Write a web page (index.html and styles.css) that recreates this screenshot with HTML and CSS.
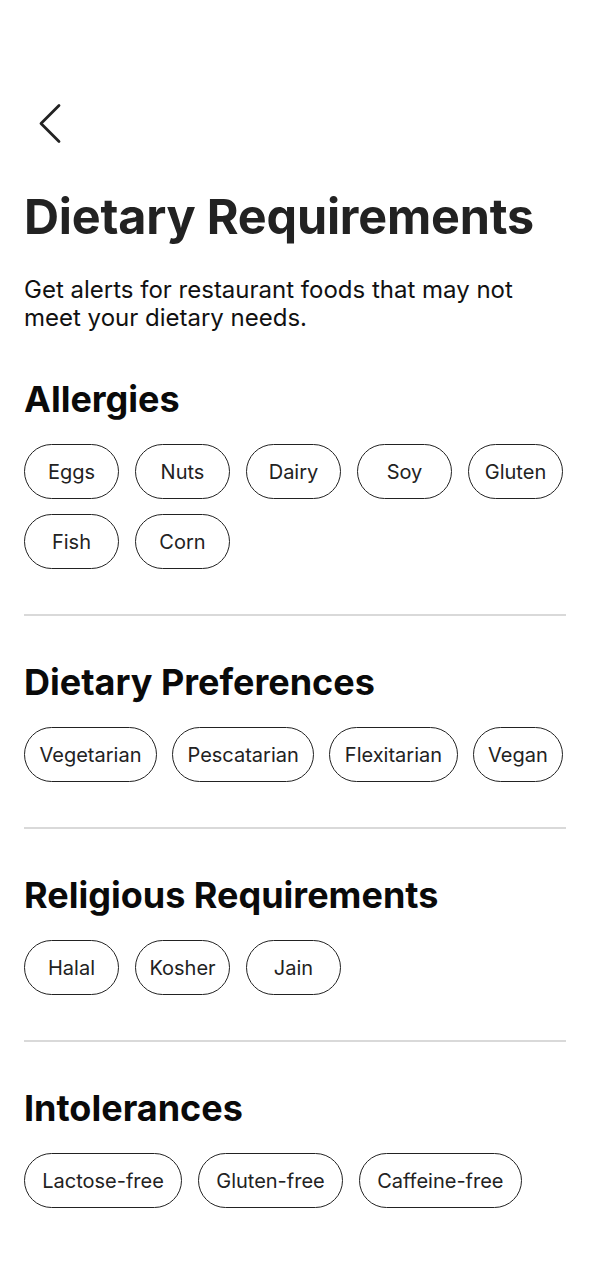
FILE: index.html
```
<!DOCTYPE html>
<html lang="en">
<head>
  <meta charset="UTF-8">
  <title>Dietary Requirements</title>
  <link rel="stylesheet" href="styles.css">
</head>
<body>
  <div class="top_bar">
    <button type="button" class="back_button" aria-label="Back">
      <svg width="24" height="44" viewBox="0 0 24 44">
        <polyline points="20,4.5 2,22.5 20,40.5" fill="none" stroke="#222" stroke-width="2.8" stroke-linecap="round" stroke-linejoin="round"/>
      </svg>
    </button>
  </div>

  <h1 class="page_title">Dietary Requirements</h1>
  <p class="page_intro">Get alerts for restaurant foods that may not meet your dietary needs.</p>

  <div class="section">
    <h2 class="section_title">Allergies</h2>
    <div class="chips chips_fixed">
      <span class="chip">Eggs</span>
      <span class="chip">Nuts</span>
      <span class="chip">Dairy</span>
      <span class="chip">Soy</span>
      <span class="chip">Gluten</span>
      <span class="chip">Fish</span>
      <span class="chip">Corn</span>
    </div>
  </div>

  <div class="section">
    <h2 class="section_title">Dietary Preferences</h2>
    <div class="chips">
      <span class="chip">Vegetarian</span>
      <span class="chip">Pescatarian</span>
      <span class="chip">Flexitarian</span>
      <span class="chip">Vegan</span>
    </div>
  </div>

  <div class="section">
    <h2 class="section_title">Religious Requirements</h2>
    <div class="chips chips_fixed">
      <span class="chip">Halal</span>
      <span class="chip">Kosher</span>
      <span class="chip">Jain</span>
    </div>
  </div>

  <div class="section">
    <h2 class="section_title">Intolerances</h2>
    <div class="chips chips_wide">
      <span class="chip">Lactose-free</span>
      <span class="chip">Gluten-free</span>
      <span class="chip">Caffeine-free</span>
    </div>
  </div>
</body>
</html>
```

FILE: styles.css
```
html,body{
  background:#fff;
}
body{
  margin:0;
  padding:0 24px 60px;
  font-family:Inter, "Noto Sans", sans-serif;
  color:#111;
}
.top_bar{
  padding-top:101px;
  padding-left:15px;
}
.back_button{
  background:none;
  border:none;
  padding:0;
  margin:0;
  display:block;
  cursor:pointer;
}
.back_button svg{
  display:block;
}
.page_title{
  margin:43px 0 0;
  font-size:48.5px;
  line-height:58px;
  font-weight:700;
  color:#222;
  letter-spacing:-0.2px;
}
.page_intro{
  margin:30px 0 0;
  font-size:24px;
  line-height:28px;
  font-weight:400;
  color:#111;
}
.section{
  padding-top:45px;
}
.section + .section{
  margin-top:45px;
  padding-top:44px;
  border-top:2px solid #d9d9d9;
}
.section_title{
  margin:0 0 23px;
  font-size:36px;
  line-height:44px;
  font-weight:700;
  color:#0a0a0a;
}
.chips{
  display:flex;
  flex-wrap:wrap;
  gap:15px 15px;
}
.chip{
  display:inline-flex;
  align-items:center;
  justify-content:center;
  box-sizing:border-box;
  height:55px;
  padding:0 14.5px;
  border:1.5px solid #222;
  border-radius:28px;
  font-size:20px;
  color:#222;
}
.chips_fixed{
  column-gap:16px;
}
.chips_fixed .chip{
  width:95px;
}
.chips_wide{
  column-gap:16px;
}
.chips_wide .chip{
  padding:0 17.2px;
}
```
